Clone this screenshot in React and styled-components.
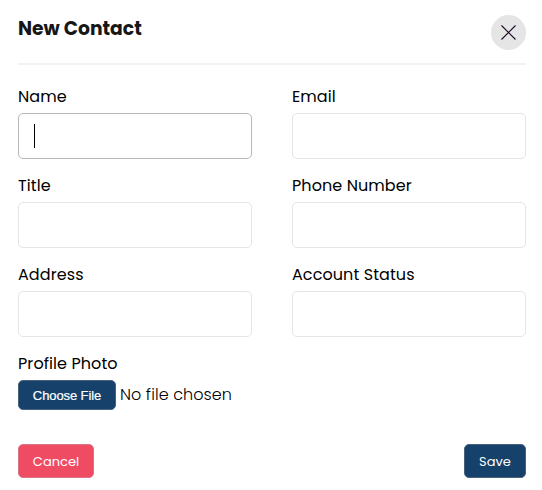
import React from "react";
import styled, { createGlobalStyle } from "styled-components";

const GlobalStyle = createGlobalStyle`
  *, *::before, *::after { box-sizing: border-box; }
  body {
    margin: 0;
    background: #fff;
    color: #000;
    font-family: Poppins, Inter, sans-serif;
    font-size: 16px;
  }
`;

const Modal = styled.main`
  width: 542px;
  height: 490px;
  padding: 14px 16px 12px 18px;
  display: flex;
  flex-direction: column;
  background: #fff;
`;

const Header = styled.header`
  height: 51px;
  display: flex;
  justify-content: space-between;
  align-items: flex-start;
  border-bottom: 2px solid #f2f2f2;
`;

const Title = styled.h3`
  margin: 0;
  font-size: 18.72px;
  line-height: 30px;
  font-weight: 700;
  color: #171717;
`;

const CloseButton = styled.button`
  width: 35px;
  height: 35px;
  margin-top: 0.5px;
  padding: 0;
  border: 0;
  border-radius: 50%;
  background: #e5e5e5;
  display: grid;
  place-items: center;
`;

const Fields = styled.div`
  margin-top: 19px;
  display: grid;
  grid-template-columns: 234px 234px;
  column-gap: 40px;
  row-gap: 14px;
`;

const Field = styled.label`
  display: flex;
  flex-direction: column;
`;

const LabelText = styled.span`
  height: 29px;
  line-height: 25px;
  font-size: 16px;
  letter-spacing: 0.08px;
  white-space: nowrap;
`;

const Control = styled.span`
  height: 46px;
  padding: 0 15px;
  border: 1px solid ${({ $focused }) => ($focused ? "#b8b8b8" : "#e5e5e5")};
  border-radius: 5px;
  display: flex;
  align-items: center;
`;

const Caret = styled.span`
  width: 1px;
  height: 24px;
  background: #000;
`;

const Upload = styled.div`
  margin-top: 14px;
  display: flex;
  flex-direction: column;
`;

const FileRow = styled.div`
  display: flex;
  align-items: flex-start;
  gap: 4px;
`;

const Button = styled.button`
  width: ${({ $width }) => $width}px;
  height: 34px;
  padding: 0;
  border: 1px solid ${({ $edge }) => $edge};
  border-radius: 5px;
  background: ${({ $fill }) => $fill};
  color: #fff;
  font: 400 13px/34px Poppins, Inter, sans-serif;
  text-align: center;
  white-space: nowrap;
`;

const FileButton = styled(Button)`
  height: 30px;
  font: 400 13px/29px "Liberation Sans", sans-serif;
  letter-spacing: -0.1px;
  -webkit-text-stroke: 0.2px #fff;
`;

const FileStatus = styled.span`
  font-size: 16px;
  line-height: 30px;
  font-weight: 300;
  letter-spacing: 0.08px;
`;

const Actions = styled.footer`
  margin-top: auto;
  display: flex;
  justify-content: space-between;
`;

const fields = [
  { label: "Name", focused: true },
  { label: "Email" },
  { label: "Title" },
  { label: "Phone Number" },
  { label: "Address" },
  { label: "Account Status" },
];

export default function App() {
  return (
    <>
      <GlobalStyle />
      <Modal>
        <Header>
          <Title>New Contact</Title>
          <CloseButton aria-label="Close">
            <svg width="15" height="15" viewBox="0 0 15 15" stroke="#1c0824" strokeWidth="1.1">
              <path d="M.5 .5l14 14M14.5 .5l-14 14" />
            </svg>
          </CloseButton>
        </Header>
        <Fields>
          {fields.map(({ label, focused }) => (
            <Field key={label}>
              <LabelText>{label}</LabelText>
              <Control $focused={focused}>{focused && <Caret />}</Control>
            </Field>
          ))}
        </Fields>
        <Upload>
          <LabelText>Profile Photo</LabelText>
          <FileRow>
            <FileButton $width={98} $fill="#15416b" $edge="#48617c">Choose File</FileButton>
            <FileStatus>No file chosen</FileStatus>
          </FileRow>
        </Upload>
        <Actions>
          <Button $width={76} $fill="#ef4b63" $edge="#dc7382">Cancel</Button>
          <Button $width={62} $fill="#15416b" $edge="#48617c">Save</Button>
        </Actions>
      </Modal>
    </>
  );
}
